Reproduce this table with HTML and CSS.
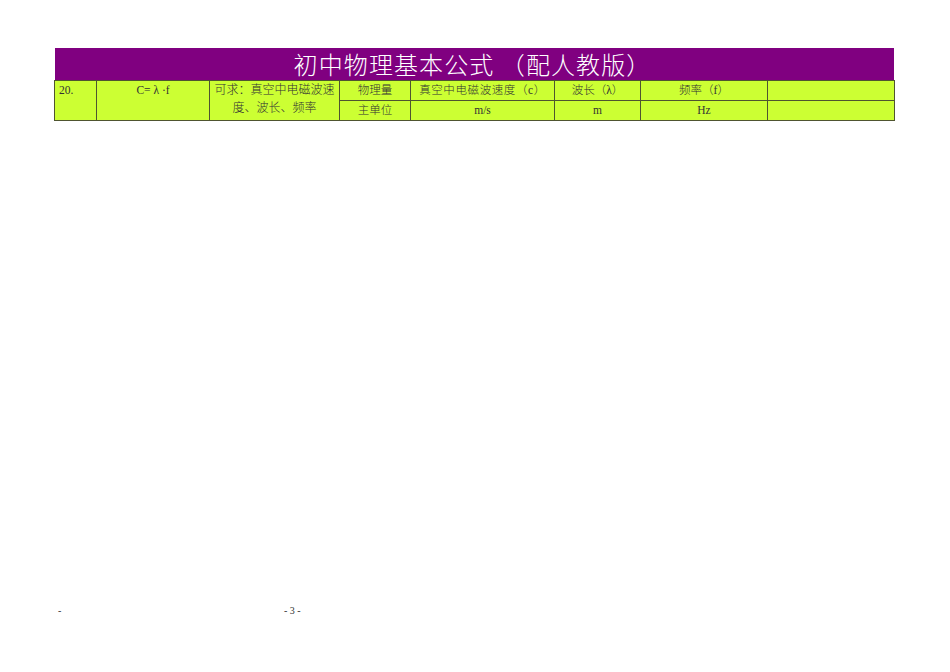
FILE: index.html
```html
<!DOCTYPE html>
<html lang="zh">
<head>
<meta charset="utf-8">
<title>初中物理基本公式</title>
<link rel="stylesheet" href="styles.css">
</head>
<body>
<div class="page">
  <div class="title">初中物理基本公式 （配人教版）</div>
  <table class="sheet">
    <colgroup>
      <col class="c1"><col class="c2"><col class="c3"><col class="c4">
      <col class="c5"><col class="c6"><col class="c7"><col class="c8">
    </colgroup>
    <tr>
      <td rowspan="2" class="num">20.</td>
      <td rowspan="2" class="formula">C= λ ·f</td>
      <td rowspan="2" class="desc">可求：真空中电磁波速度、波长、频率</td>
      <td>物理量</td>
      <td class="wide">真空中电磁波速度（c）</td>
      <td>波长（λ）</td>
      <td>频率（f）</td>
      <td></td>
    </tr>
    <tr>
      <td>主单位</td>
      <td>m/s</td>
      <td>m</td>
      <td>Hz</td>
      <td></td>
    </tr>
  </table>
  <div class="footer">
    <span class="dash">-</span>
    <span class="pageno">- 3 -</span>
  </div>
</div>
</body>
</html>
```
FILE: styles.css
```css
html, body {
  margin: 0;
  padding: 0;
  background: #ffffff;
}
.page {
  padding: 48px 0 0 55px;
  font-family: "Liberation Serif", "Noto Sans CJK SC", serif;
  text-spacing-trim: space-all;
}
.title {
  width: 839px;
  height: 32px;
  background: #800080;
  color: #ffffff;
  font-family: "Noto Sans CJK SC", sans-serif;
  font-weight: 300;
  font-size: 24px;
  line-height: 32px;
  letter-spacing: 1.1px;
  text-align: center;
  box-sizing: border-box;
  padding-right: 4px;
  text-spacing-trim: space-all;
}
.sheet {
  width: 840px;
  border-collapse: collapse;
  table-layout: fixed;
  background: #ccff33;
  font-size: 11.5px;
  color: #333;
  margin-left: -1px;
}
.sheet td {
  border: 1px solid #4f5530;
  height: 19px;
  padding: 0 4px;
  text-align: center;
  vertical-align: middle;
  line-height: 19px;
  overflow: hidden;
  white-space: nowrap;
  font-weight: 300;
}
.sheet td.wide {
  letter-spacing: 0.6px;
}
.sheet td.num {
  text-align: left;
  vertical-align: top;
}
.sheet td.formula {
  vertical-align: top;
}
.sheet td.desc {
  white-space: normal;
  vertical-align: top;
  line-height: 18px;
  padding: 0 3px;
  font-size: 12px;
}
.c1 { width: 42px; }
.c2 { width: 113px; }
.c3 { width: 130px; }
.c4 { width: 71px; }
.c5 { width: 144px; }
.c6 { width: 86px; }
.c7 { width: 127px; }
.c8 { width: 127px; }
.footer {
  display: flex;
  margin-top: 484px;
  padding-left: 3px;
  font-size: 10px;
  color: #333;
}
.dash {
  width: 226px;
}
```
